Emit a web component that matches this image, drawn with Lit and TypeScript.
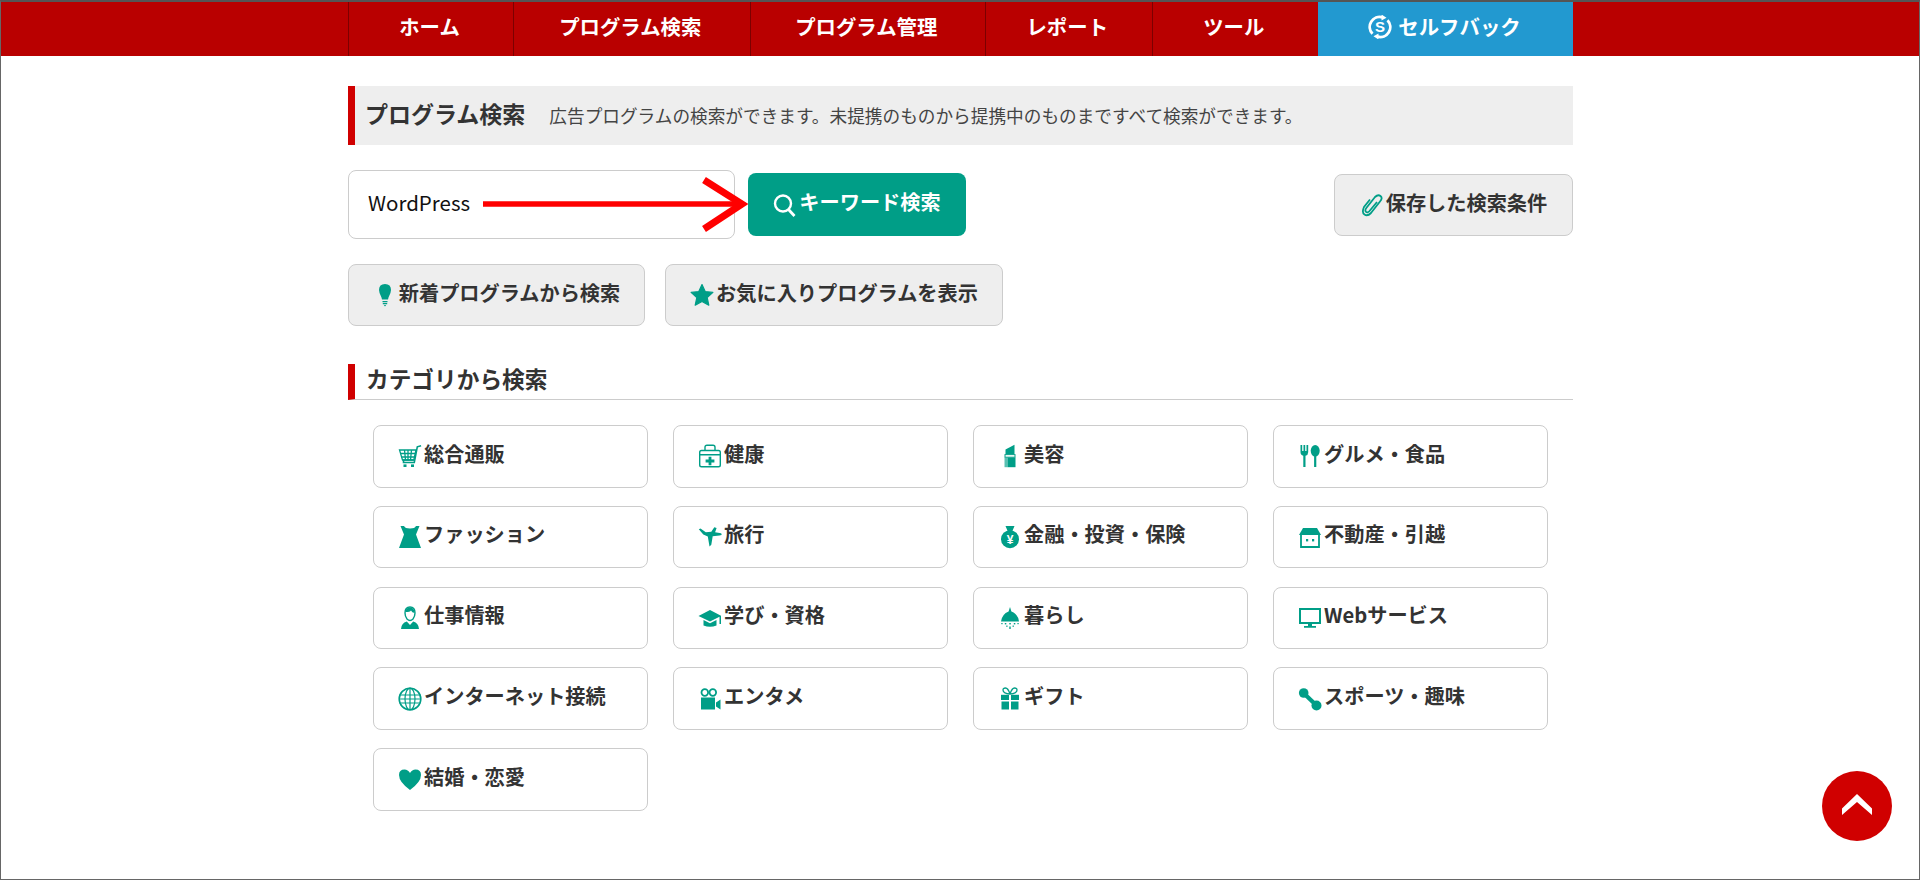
import { LitElement, html, css, svg } from "lit";
import { customElement } from "lit/decorators.js";

const G = "#009e87";
const ic = (body: unknown) => html`<svg class="ic" viewBox="0 0 24 24" aria-hidden="true">${body}</svg>`;

const icons: Record<string, unknown> = {
  cart: ic(svg`<g fill="none" stroke="${G}" stroke-width="1.3"><path d="M1.500 6h16.500l-2.200 10H4.500z"/><path d="M2.500 9.500h15M3.500 13h13M6.500 6l1 10M10 6v10M13.500 6l-1 10"/><path d="M15.800 16H5.500v2.500h10.800L19.300 2.800l3.800-1" stroke-width="1.600"/></g><rect x="5.500" y="20.400" width="3" height="2.600" fill="${G}"/><rect x="13" y="20.400" width="3" height="2.600" fill="${G}"/>`),
  health: ic(svg`<g fill="none" stroke="${G}" stroke-width="1.400"><rect x="1.700" y="6.500" width="20.600" height="16.300" rx="1.800"/><path d="M7 6.500V3.200q0-2 2-2h6q2 0 2 2v3.300M1.700 10.800h20.600"/></g><path d="M10.600 12.700h2.800v2.900h3v2.800h-3v2.900h-2.800v-2.900h-3v-2.800h3z" fill="${G}"/>`),
  lipstick: ic(svg`<path d="M7.500 10V5.500L16.500 .8V10z" fill="${G}"/><rect x="7" y="10.600" width="10" height="2.600" fill="#fff" stroke="${G}" stroke-width="1"/><rect x="6.500" y="13.500" width="3" height="9.700" fill="${G}" opacity=".65"/><rect x="9.500" y="13.500" width="8" height="9.700" fill="${G}"/>`),
  food: ic(svg`<g fill="${G}"><path d="M2.500 1h1.700v6h1.300V1h1.700v6h1.300V1h1.700v7.200q0 2.800-2.700 3.500V23H5.300V11.700q-2.800-.7-2.800-3.500z"/><ellipse cx="17.200" cy="6.800" rx="4.500" ry="5.800"/><rect x="16.100" y="10" width="2.200" height="13"/></g>`),
  dress: ic(svg`<path d="M2.500 1H6q1 2.500 6 2.500T18 1h3.500L18 9.500 23 23H1L6 9.500z" fill="${G}"/>`),
  plane: ic(svg`<path d="M.8 4.200l1.700-.7 5.300 3.700 5.500-.4 3-4.500 2.300.7-1.500 4.300 5.900 1q1 .7.500 1.700l-2 .5-6.800.7-1.400 8.500-1.800 1.800-1.700-9.900-4.500-2.200z" fill="${G}"/>`),
  money: ic(svg`<path d="M7.500 1h9l-2 4.800 1 2.200h-7l1-2.200z" fill="${G}"/><circle cx="12" cy="14.200" r="9" fill="${G}"/><text x="12" y="18.800" text-anchor="middle" font-size="12" font-weight="700" fill="#fff" font-family="'Liberation Sans',sans-serif">¥</text>`),
  store: ic(svg`<path d="M5 3h14l4 7H1z" fill="${G}"/><path d="M3 9.500V22h18V9.500" fill="none" stroke="${G}" stroke-width="1.800"/><rect x="8" y="14" width="2.200" height="2.400" fill="${G}"/><rect x="14" y="14" width="2.200" height="2.400" fill="${G}"/>`),
  person: ic(svg`<path d="M12 1q5 0 5 6 0 3.500-2 6-1.500 1.500-3 1.500T9 13q-2-2.500-2-6 0-6 5-6z" fill="none" stroke="${G}" stroke-width="1.400"/><path d="M7.500 6q4.500 0 5.500-1.500 1 2 3.500 2.500q0-5.500-4.500-5.500T7.500 6z" fill="${G}"/><path d="M8.800 15.500L12 19l3.200-3.500q5.500 1.500 5.800 7.500H3q.3-6 5.800-7.500z" fill="${G}"/>`),
  cap: ic(svg`<path d="M12 4L.5 10 12 15.500l9.500-4.800V18H23v-8.200z" fill="${G}"/><path d="M5.500 14v5.500q6.500 2.500 13 0V14L12 17.200z" fill="${G}"/>`),
  lamp: ic(svg`<path d="M12 1l1.400 4.500q6.600 2.600 7.600 10H3q1-7.400 7.600-10z" fill="${G}"/><g fill="${G}"><rect x="11.300" y="20.500" width="1.400" height="2.500"/><rect x="6.800" y="17" width="1.500" height="1.400"/><rect x="11.300" y="17" width="1.500" height="1.400"/><rect x="15.800" y="17" width="1.500" height="1.400"/><rect x="8.300" y="19.500" width="1.200" height="1.400"/><rect x="14.600" y="19.500" width="1.200" height="1.400"/><rect x="3.300" y="17" width="1.300" height="1.200"/><rect x="19.400" y="17" width="1.300" height="1.200"/></g>`),
  monitor: ic(svg`<rect x="2" y="3" width="20" height="14" fill="none" stroke="${G}" stroke-width="2"/><path d="M10 18h4v2h4v1.800H6V20h4z" fill="${G}"/>`),
  globe: ic(svg`<g fill="none" stroke="${G}" stroke-width="1.200"><circle cx="12" cy="12" r="10.800" stroke-width="1.600"/><ellipse cx="12" cy="12" rx="5" ry="10.800"/><path d="M12 1v22M1.500 8h21M1.500 12h21M1.500 16h21"/></g>`),
  video: ic(svg`<g fill="none" stroke="${G}" stroke-width="1.800"><circle cx="6.800" cy="5.500" r="3.300"/><circle cx="14.800" cy="5.500" r="3.300"/></g><rect x="3" y="10.500" width="14" height="12" fill="${G}"/><path d="M18 15.500l4.500-3v10l-4.500-3z" fill="${G}"/>`),
  gift: ic(svg`<g fill="none" stroke="${G}" stroke-width="1.300"><path d="M12 7Q5 6.500 5 3q0-2 2.500-2T12 7zM12 7q7-.5 7-4 0-2-2.500-2T12 7z"/></g><g fill="${G}"><rect x="3" y="7.800" width="8" height="5.200"/><rect x="13" y="7.800" width="8" height="5.200"/><rect x="3.500" y="14.500" width="7.500" height="8"/><rect x="13" y="14.500" width="7.500" height="8"/></g>`),
  sports: ic(svg`<g fill="${G}"><circle cx="5.700" cy="6" r="4.800"/><circle cx="18.500" cy="18.500" r="5"/></g><path d="M6 6.500L18 18" stroke="${G}" stroke-width="4.200" fill="none"/>`),
  heart: ic(svg`<path d="M12 23Q1 15 1 8q0-5.500 5.500-5.500Q10 2.500 12 6q2-3.500 5.500-3.500Q23 2.500 23 8q0 7-11 15z" fill="${G}"/>`),
  search: ic(svg`<circle cx="10" cy="10.500" r="8" fill="none" stroke="#fff" stroke-width="2.400"/><path d="M15.500 16.500l6 6.500" fill="none" stroke="#fff" stroke-width="2.800"/>`),
  clip: ic(svg`<path d="M17 9l-7.500 9q-2 2.200-3.500.800t.5-4L15 4q3-3 5.500-1t-.5 5.500L11 20q-3.500 3.500-6.500 1.500T4 14l6-7.500" fill="none" stroke="${G}" stroke-width="1.800"/>`),
  bulb: ic(svg`<path d="M12 1q6 0 6 6 0 3-2.500 7.500l-.5 2H9l-.5-2Q6 10 6 7q0-6 6-6z" fill="${G}"/><path d="M9.500 18h5v1.300h-5zM9.800 20h4.400v1.300H9.800zM10.800 22h2.400l-1.200 1.500z" fill="${G}"/>`),
  star: ic(svg`<path d="M12 1.500l3.200 7 7.700.9-5.700 5.200 1.600 7.600-6.800-3.800-6.800 3.800 1.600-7.600L1.100 9.400l7.700-.9z" fill="${G}" stroke="${G}" stroke-width="1.200" stroke-linejoin="round"/>`),
  self: ic(svg`<g fill="none" stroke="#fff" stroke-width="2.800"><path d="M4.500 18.800A10 10 0 0 1 14.500 2.300"/><path d="M19.500 5.200A10 10 0 0 1 9.500 21.700"/></g><path d="M13.500 -.5l5 3.200-5 2.800zM10.500 24.500l-5-3.200 5-2.800z" fill="#fff"/><text x="12" y="17.300" text-anchor="middle" font-size="15" font-weight="700" fill="#fff" font-family="'Liberation Sans',sans-serif">S</text>`),
};

const NAV = [
  { label: "ホーム" },
  { label: "プログラム検索" },
  { label: "プログラム管理" },
  { label: "レポート" },
  { label: "ツール" },
  { label: "セルフバック", icon: "self", active: true },
];

const CATS: [string, string][] = [
  ["cart", "総合通販"], ["health", "健康"], ["lipstick", "美容"], ["food", "グルメ・食品"],
  ["dress", "ファッション"], ["plane", "旅行"], ["money", "金融・投資・保険"], ["store", "不動産・引越"],
  ["person", "仕事情報"], ["cap", "学び・資格"], ["lamp", "暮らし"], ["monitor", "Webサービス"],
  ["globe", "インターネット接続"], ["video", "エンタメ"], ["gift", "ギフト"], ["sports", "スポーツ・趣味"],
  ["heart", "結婚・恋愛"],
];

@customElement("app-root")
export class AppRoot extends LitElement {
  static styles = css`
    :host { display: block; font-family: "Noto Sans CJK JP", "Noto Sans", sans-serif; color: #333; }
    * { box-sizing: border-box; }
    .page { position: relative; height: 880px; overflow: hidden; background: #fff; border: 1px solid #666; border-top: 2px solid #555; }
    .nav { height: 54px; background: #b90000; }
    .wrap { width: 1225px; margin-left: 347px; }
    .nav-list { display: grid; grid-template-columns: 165px 236.5px 235.5px 166.5px 166.5px 255px; height: 54px; border-right: 1px solid #7c0000; }
    .nav-item { display: flex; align-items: center; justify-content: center; gap: 6px; padding: 0 3px 6px 0; color: #fff; font-size: 20.4px; font-weight: 700; line-height: 1; border-left: 1px solid #7c0000; }
    .nav-item.active { background: #2299d0; border-left-color: #2299d0; }
    .nav-item .ic { margin-top: 2px; }
    .ic { width: 24px; height: 24px; flex: none; display: block; }
    .title { margin-top: 30px; height: 59px; display: flex; align-items: center; background: #eee; border-left: 7px solid #d00000; padding-left: 10px; }
    .title h1 { margin: 0 24px 5px 0; font-size: 23px; font-weight: 700; line-height: 1; }
    .title p { margin: 0; font-size: 17.67px; line-height: 1; color: #444; }
    .search-row { position: relative; margin-top: 25px; height: 69px; display: flex; align-items: center; }
    .input { width: 387px; height: 69px; display: flex; align-items: center; padding: 0 0 5px 19px; background: #fff; border: 1px solid #ccc; border-radius: 8px; font-size: 20.5px; color: #111; }
    .btn { display: flex; align-items: center; justify-content: center; gap: 2px; height: 62px; border-radius: 8px; font-size: 20.2px; font-weight: 700; line-height: 1; background: #eee; border: 1px solid #ccc; padding-bottom: 4px; }
    .btn .ic { margin-top: 4px; }
    .btn.primary { margin-left: 13px; width: 218px; height: 63px; color: #fff; background: #009e87; border: 0; }
    .btn.saved { margin: 1px 0 0 auto; width: 239px; }
    .arrow { position: absolute; left: 134px; top: 8px; width: 266px; height: 54px; overflow: visible; }
    .btn-row { margin-top: 25px; display: flex; gap: 20px; }
    .btn.new { width: 297px; }
    .btn.fav { width: 338px; }
    .section { margin-top: 38px; height: 36px; display: flex; align-items: center; border-left: 7px solid #d00000; border-bottom: 1px solid #ccc; padding-left: 11px; }
    .section h2 { margin: 0 0 4px; font-size: 22.7px; font-weight: 700; line-height: 1; }
    .grid { margin: 25px 0 0 25px; display: grid; grid-template-columns: repeat(4, 275px); column-gap: 25px; row-gap: 18.25px; grid-auto-rows: 62.5px; }
    .card { display: flex; align-items: center; gap: 2px; padding-left: 24px; background: #fff; border: 1px solid #ccc; border-radius: 8px; font-size: 20.2px; font-weight: 700; line-height: 1; }
    .card span { padding-bottom: 5px; }
    .top { position: absolute; left: 1821px; top: 769px; width: 70px; height: 70px; border-radius: 50%; background: #d00000; display: flex; align-items: center; justify-content: center; }
    .top svg { width: 30px; height: 22px; display: block; margin-top: -2px; }
  `;

  render() {
    return html`
      <div class="page">
        <nav class="nav"><div class="wrap nav-list">
          ${NAV.map((n) => html`<div class="nav-item ${n.active ? "active" : ""}">${n.icon ? icons[n.icon] : ""}${n.label}</div>`)}
        </div></nav>
        <main class="wrap">
          <div class="title"><h1>プログラム検索</h1><p>広告プログラムの検索ができます。未提携のものから提携中のものまですべて検索ができます。</p></div>
          <div class="search-row">
            <div class="input">WordPress</div>
            <div class="btn primary">${icons.search}キーワード検索</div>
            <div class="btn saved">${icons.clip}保存した検索条件</div>
            <svg class="arrow" viewBox="0 0 266 54" aria-hidden="true"><path d="M1 26H258" fill="none" stroke="#f00" stroke-width="5.500"/><path d="M222 2l38 24-38 25" fill="none" stroke="#f00" stroke-width="7"/></svg>
          </div>
          <div class="btn-row">
            <div class="btn new">${icons.bulb}新着プログラムから検索</div>
            <div class="btn fav">${icons.star}お気に入りプログラムを表示</div>
          </div>
          <div class="section"><h2>カテゴリから検索</h2></div>
          <div class="grid">
            ${CATS.map(([i, t]) => html`<div class="card">${icons[i]}<span>${t}</span></div>`)}
          </div>
        </main>
        <div class="top"><svg viewBox="0 0 30 22" aria-hidden="true"><path d="M0 14.500L15 0l15 14.500V21L15 8 0 21z" fill="#fff"/></svg></div>
      </div>
    `;
  }
}
